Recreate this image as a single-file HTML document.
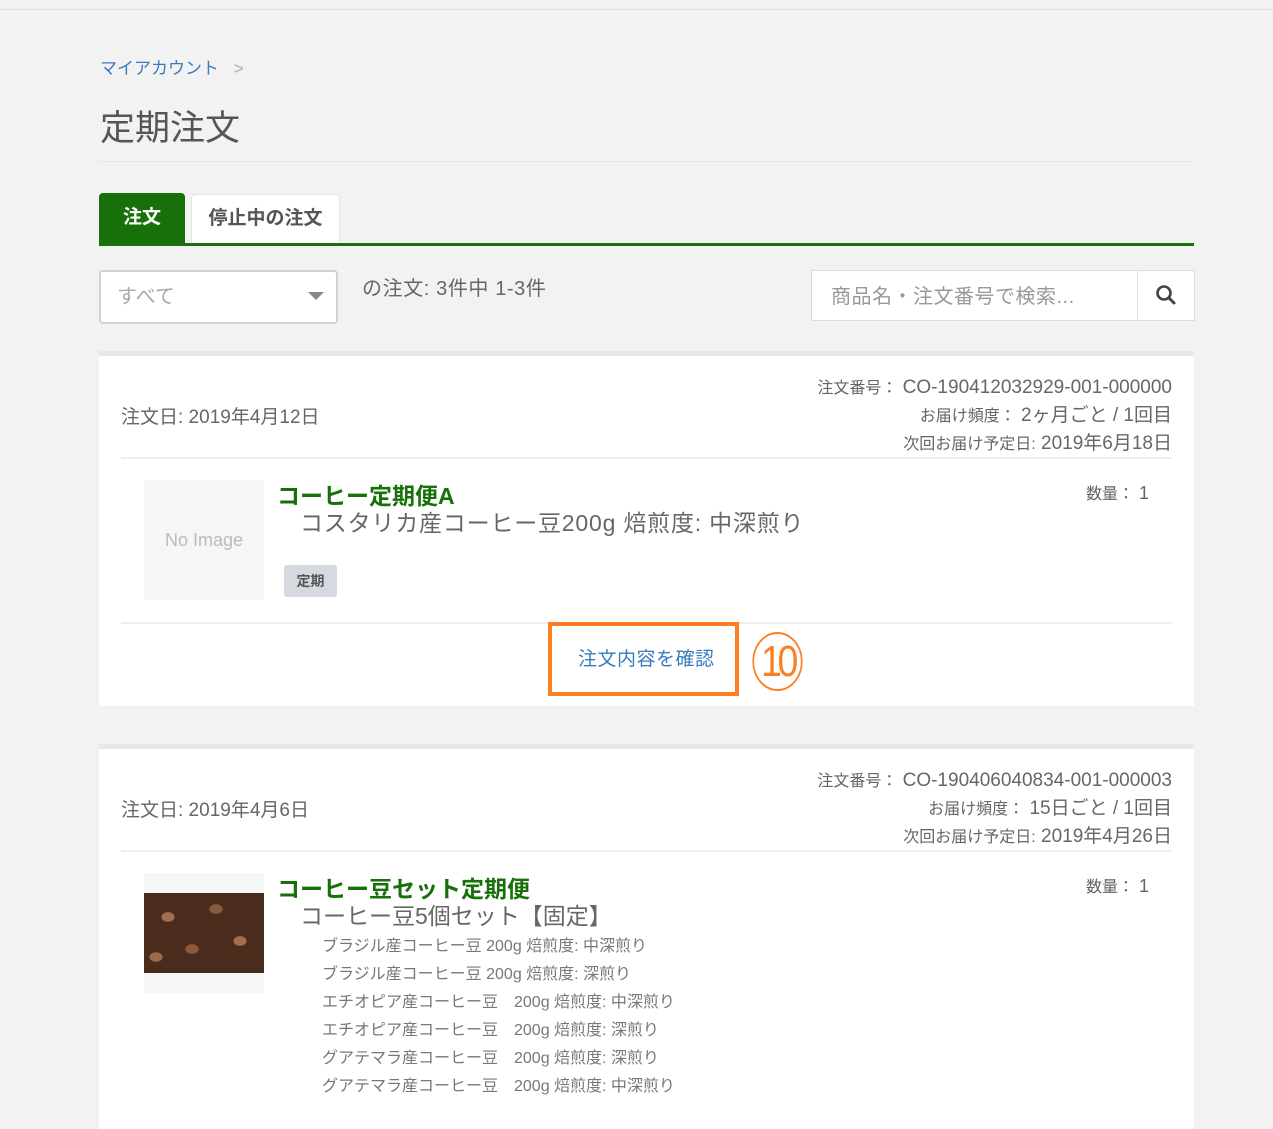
<!DOCTYPE html><html><head><meta charset="utf-8"><style>
body{margin:0;width:1273px;height:1118px;background:#f2f2f2;font-family:"Liberation Sans","Noto Sans CJK JP",sans-serif;color:#555;overflow:hidden;position:relative}
.a{position:absolute;white-space:nowrap}
.card{position:absolute;left:99px;width:1095px;background:#fff;border-top:5px solid #e6e9ec}
.r{text-align:right;right:22px}
.hl{position:absolute;left:22px;right:22px;height:2px;background:#eee}
.sub{font-size:16px;color:#666}
</style></head><body>
<div class="a" style="left:0;top:9px;width:1273px;height:1px;background:#ddd"></div>
<div class="a" style="left:100px;top:54px;font-size:17px;color:#3a7bbf">マイアカウント <span style="color:#aaa;margin-left:10px">&gt;</span></div>
<div class="a" style="left:100px;top:100px;font-size:35px;color:#555">定期注文</div>
<div class="a" style="left:99px;top:161px;width:1095px;height:1px;background:#e4e4e4"></div>
<div class="a" style="left:99px;top:193px;width:86px;height:52px;background:#177009;border-radius:4px 4px 0 0;color:#fff;font-weight:bold;font-size:19px;line-height:50px;text-align:center">注文</div>
<div class="a" style="left:191px;top:194px;width:147px;height:50px;background:#fff;border:1px solid #e4e4e4;border-bottom:0;border-radius:4px 4px 0 0;font-weight:bold;font-size:19px;line-height:48px;text-align:center;color:#555">停止中の注文</div>
<div class="a" style="left:99px;top:243px;width:1095px;height:3px;background:#177009"></div>
<div class="a" style="left:99px;top:270px;width:235px;height:50px;background:#fff;border:2px solid #d2d2d2;border-radius:4px"></div>
<div class="a" style="left:117px;top:280px;font-size:20px;color:#aaa">すべて</div>
<div class="a" style="left:308px;top:292px;width:0;height:0;border-left:8px solid transparent;border-right:8px solid transparent;border-top:8px solid #888"></div>
<div class="a" style="left:362px;top:272px;font-size:20px;color:#666;letter-spacing:0.6px">の注文: 3件中 1-3件</div>
<div class="a" style="left:811px;top:270px;width:325px;height:49px;background:#fff;border:1px solid #ddd"></div>
<div class="a" style="left:831px;top:280px;font-size:20px;color:#999;letter-spacing:0.5px">商品名・注文番号で検索...</div>
<div class="a" style="left:1137px;top:270px;width:56px;height:49px;background:#fff;border:1px solid #ddd"></div>
<svg class="a" style="left:1155px;top:284px" width="22" height="22" viewBox="0 0 22 22"><circle cx="9" cy="9" r="6.5" fill="none" stroke="#444" stroke-width="2.6"/><path d="M14 14l5 5" stroke="#444" stroke-width="3" stroke-linecap="round"/></svg>

<div class="card" style="top:351px;height:350px">
<div class="a r sub" style="top:18px;line-height:27px;font-size:19px"><span style="font-size:16px">注文番号：</span> CO-190412032929-001-000000<br><span style="font-size:16px">お届け頻度：</span> 2ヶ月ごと / 1回目<br><span style="font-size:16px">次回お届け予定日:</span> 2019年6月18日</div>
<div class="a sub" style="left:22px;top:46px;font-size:19px">注文日: 2019年4月12日</div>
<div class="hl" style="top:101px"></div>
<div class="a" style="left:45px;top:124px;width:120px;height:120px;background:#f5f6f6;color:#bbb;font-size:18px;line-height:120px;text-align:center">No Image</div>
<div class="a" style="left:178px;top:121px;font-size:23px;font-weight:bold;color:#177009">コーヒー定期便A</div>
<div class="a" style="left:201px;top:148px;font-size:23px;color:#666;letter-spacing:0.8px">コスタリカ産コーヒー豆200g 焙煎度: 中深煎り</div>
<div class="a" style="left:185px;top:209px;width:53px;height:32px;background:#d4dae0;border-radius:3px;font-size:14px;font-weight:bold;line-height:32px;text-align:center;color:#555">定期</div>
<div class="a" style="right:45px;top:124px;font-size:18px;color:#666"><span style="font-size:16px">数量：</span> 1</div>
<div class="hl" style="top:266px"></div>
<div class="a" style="left:449px;top:266px;width:183px;height:66px;border:4px solid #fd7e23"></div>
<div class="a" style="left:479px;top:288px;font-size:19px;color:#3a7bbf;letter-spacing:0.5px">注文内容を確認</div>
<div class="a" style="left:649px;top:276px;width:55px;height:55px;border:2px solid #fd7e23;border-radius:50%;color:#fd7e23;font-size:44px;line-height:55px;text-align:center;letter-spacing:-5px;transform:scaleX(0.85)">10</div>
</div>

<div class="card" style="top:744px;height:380px">
<div class="a r sub" style="top:18px;line-height:27px;font-size:19px"><span style="font-size:16px">注文番号：</span> CO-190406040834-001-000003<br><span style="font-size:16px">お届け頻度：</span> 15日ごと / 1回目<br><span style="font-size:16px">次回お届け予定日:</span> 2019年4月26日</div>
<div class="a sub" style="left:22px;top:46px;font-size:19px">注文日: 2019年4月6日</div>
<div class="hl" style="top:101px"></div>
<div class="a" style="left:45px;top:124px;width:120px;height:120px;background:#f5f6f6"><div style="margin-top:20px;height:80px;background:radial-gradient(ellipse 7px 5px at 20% 30%,#a07050 90%,transparent),radial-gradient(ellipse 7px 5px at 60% 20%,#8a5a3a 90%,transparent),radial-gradient(ellipse 7px 5px at 80% 60%,#a07050 90%,transparent),radial-gradient(ellipse 7px 5px at 40% 70%,#8a5a3a 90%,transparent),radial-gradient(ellipse 7px 5px at 10% 80%,#9a6a48 90%,transparent),#4a2c1c"></div></div>
<div class="a" style="left:178px;top:121px;font-size:23px;font-weight:bold;color:#177009">コーヒー豆セット定期便</div>
<div class="a" style="left:201px;top:148px;font-size:23px;color:#666">コーヒー豆5個セット【固定】</div>
<div class="a" style="left:223px;top:184px;font-size:16px;color:#777;line-height:28px">ブラジル産コーヒー豆 200g 焙煎度: 中深煎り<br>ブラジル産コーヒー豆 200g 焙煎度: 深煎り<br>エチオピア産コーヒー豆　200g 焙煎度: 中深煎り<br>エチオピア産コーヒー豆　200g 焙煎度: 深煎り<br>グアテマラ産コーヒー豆　200g 焙煎度: 深煎り<br>グアテマラ産コーヒー豆　200g 焙煎度: 中深煎り</div>
<div class="a" style="right:45px;top:124px;font-size:18px;color:#666"><span style="font-size:16px">数量：</span> 1</div>
</div>
</body></html>
